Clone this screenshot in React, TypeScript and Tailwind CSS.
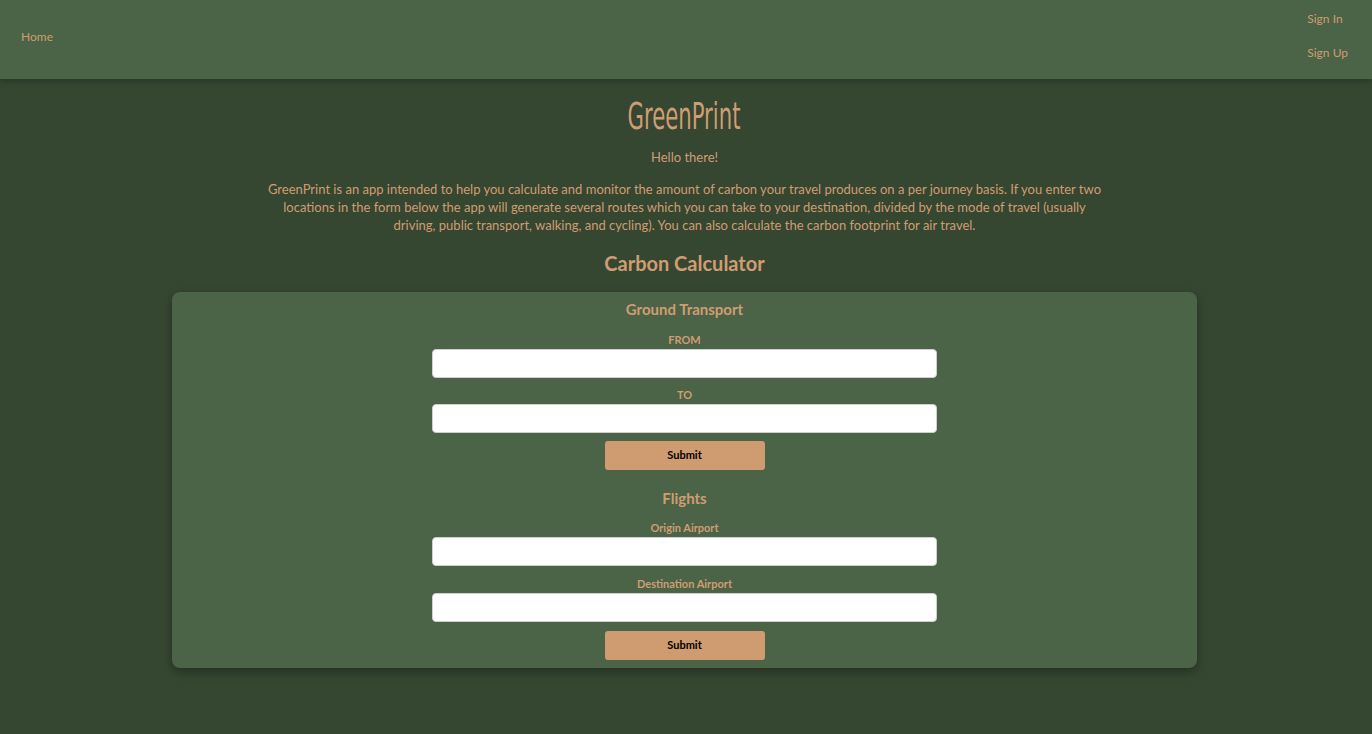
import React from "react";

const tan = "text-[#d09d72]";

function Field({ label, upper }: { label: string; upper?: boolean }) {
  return (
    <div className="flex flex-col items-center w-full">
      <label className={`text-[11px] font-bold leading-[14px] ${tan} ${upper ? "uppercase" : ""}`}>{label}</label>
      <input
        type="text"
        className="mt-[2px] w-[505px] h-[29px] bg-white rounded-[4px] border border-[#cfcfcf] outline-none px-2"
      />
    </div>
  );
}

function SubmitButton() {
  return (
    <button className="w-[160px] h-[29px] bg-[#cf9b70] rounded-[3px] text-[11px] font-bold text-black">
      Submit
    </button>
  );
}

export default function App() {
  return (
    <div
      className="min-h-[734px] w-full bg-[#354631] flex flex-col"
      style={{ fontFamily: "Lato, 'Noto Sans', sans-serif" }}
    >
      <header className="h-[79px] bg-[#4b6346] shadow-[0_2px_6px_rgba(0,0,0,0.25)] flex items-start justify-between pl-[21px] pr-[24px] pt-[11px]">
        <a className={`mt-[18px] text-[12px] leading-[15px] ${tan}`}>Home</a>
        <div className="flex flex-col items-start gap-[19px] text-[12px] leading-[15px]">
          <a className={tan}>Sign In</a>
          <a className={tan}>Sign Up</a>
        </div>
      </header>

      <main className="flex flex-col items-center pr-[3px]">
        <h1
          className={`mt-[16px] text-[38px] leading-[42px] ${tan} scale-x-[0.62]`}
          style={{ fontFamily: "'DejaVu Sans Condensed', 'DejaVu Sans', sans-serif" }}
        >
          GreenPrint
        </h1>
        <p className={`mt-[11px] text-[13px] leading-[18px] ${tan}`}>Hello there!</p>
        <p className={`mt-[14px] max-w-[840px] text-center text-[13px] leading-[18px] ${tan}`}>
          GreenPrint is an app intended to help you calculate and monitor the amount of carbon your travel produces on a per journey basis. If you enter two locations in the form below the app will generate several routes which you can take to your destination, divided by the mode of travel (usually driving, public transport, walking, and cycling). You can also calculate the carbon footprint for air travel.
        </p>
        <h2 className={`mt-[17px] text-[20px] leading-[24px] font-bold ${tan}`}>Carbon Calculator</h2>

        <section className="mt-[17px] w-[1025px] bg-[#4b6346] rounded-[8px] shadow-[0_4px_10px_rgba(0,0,0,0.3)] flex flex-col items-center pt-[8px] pb-[8px]">
          <h3 className={`text-[15px] leading-[18px] font-bold ${tan}`}>Ground Transport</h3>
          <div className="mt-[15px] w-full flex flex-col items-center gap-[10px]">
            <Field label="From" upper />
            <Field label="To" upper />
          </div>
          <div className="mt-[8px] flex">
            <SubmitButton />
          </div>
          <h3 className={`mt-[19px] text-[15px] leading-[18px] font-bold ${tan}`}>Flights</h3>
          <div className="mt-[14px] w-full flex flex-col items-center gap-[11px]">
            <Field label="Origin Airport" />
            <Field label="Destination Airport" />
          </div>
          <div className="mt-[9px] flex">
            <SubmitButton />
          </div>
        </section>
      </main>
    </div>
  );
}
